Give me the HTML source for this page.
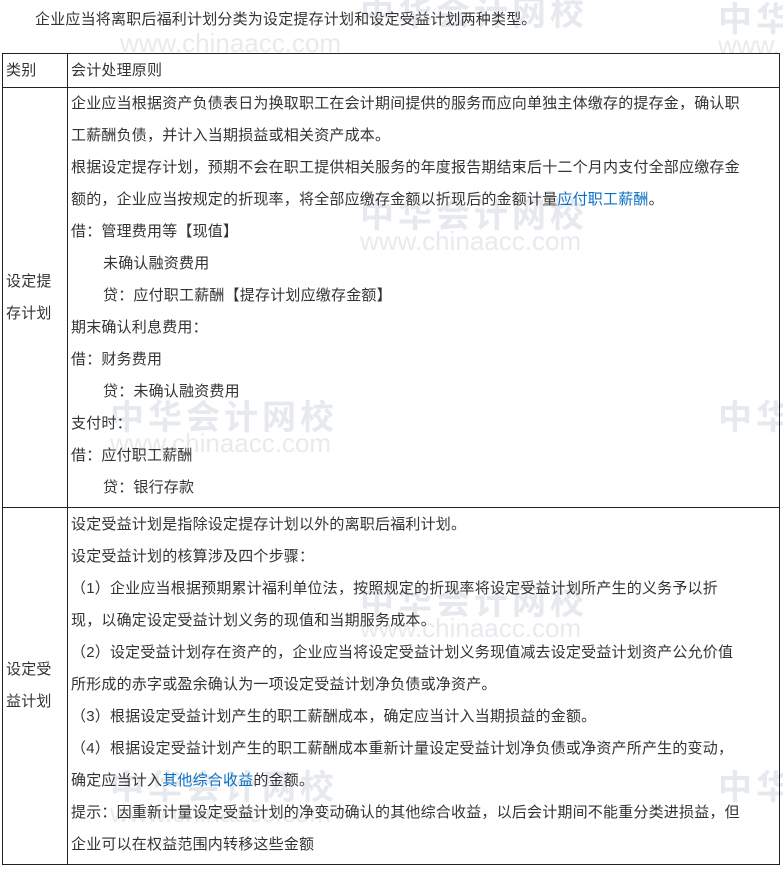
<!DOCTYPE html>
<html><head><meta charset="utf-8"><style>
body{margin:0;background:#fff;width:783px;height:869px;position:relative;overflow:hidden;font-family:"Liberation Sans","Noto Sans CJK SC",sans-serif;font-size:15px;letter-spacing:0.2px;color:#333}
.wm{position:absolute;color:#e6e9ee;font-weight:bold;font-size:34px;letter-spacing:4px;z-index:0;white-space:nowrap}
.wu{position:absolute;color:#e8eaee;font-size:26px;z-index:0;white-space:nowrap;letter-spacing:0}
p.top{position:absolute;left:35px;top:8px;margin:0;line-height:24px;z-index:1;white-space:nowrap}
table{position:absolute;left:2px;top:53px;border-collapse:collapse;z-index:1}
td{border:1px solid #222;padding:0 3px;line-height:32px;vertical-align:middle;white-space:nowrap}
td.c1{width:58px}
td.c2{width:706px;padding:0 2px 3px 3px;overflow:hidden}
a{color:#0b6fc4;text-decoration:none}
.i{padding-left:32px}
</style></head><body>
<div class="wm" style="left:360px;top:-14px">中华会计网校</div><div class="wu" style="left:120px;top:28px">www.chinaacc.com</div>
<div class="wm" style="left:718px;top:-8px">中华</div><div class="wu" style="left:718px;top:30px">www.</div>
<div class="wm" style="left:360px;top:188px">中华会计网校</div><div class="wu" style="left:360px;top:226px">www.chinaacc.com</div>
<div class="wm" style="left:110px;top:390px">中华会计网校</div><div class="wu" style="left:110px;top:428px">www.chinaacc.com</div>
<div class="wm" style="left:718px;top:390px">中华</div>
<div class="wm" style="left:360px;top:575px">中华会计网校</div><div class="wu" style="left:360px;top:613px">www.chinaacc.com</div>
<div class="wm" style="left:110px;top:760px">中华会计网校</div><div class="wu" style="left:110px;top:798px">www.chinaacc.com</div>
<div class="wm" style="left:718px;top:760px">中华</div>
<p class="top">企业应当将离职后福利计划分类为设定提存计划和设定受益计划两种类型。</p>
<table>
<tr style="height:34px"><td class="c1">类别</td><td class="c2" style="padding-bottom:0">会计处理原则</td></tr>
<tr><td class="c1">设定提<br>存计划</td><td class="c2" style="height:415px">
企业应当根据资产负债表日为换取职工在会计期间提供的服务而应向单独主体缴存的提存金，确认职<br>工薪酬负债，并计入当期损益或相关资产成本。<br>
根据设定提存计划，预期不会在职工提供相关服务的年度报告期结束后十二个月内支付全部应缴存金<br>额的，企业应当按规定的折现率，将全部应缴存金额以折现后的金额计量<a>应付职工薪酬</a>。<br>
借：管理费用等【现值】<br>
<span class="i">未确认融资费用</span><br>
<span class="i">贷：应付职工薪酬【提存计划应缴存金额】</span><br>
期末确认利息费用：<br>
借：财务费用<br>
<span class="i">贷：未确认融资费用</span><br>
支付时：<br>
借：应付职工薪酬<br>
<span class="i">贷：银行存款</span></td></tr>
<tr><td class="c1">设定受<br>益计划</td><td class="c2" style="height:353px">
设定受益计划是指除设定提存计划以外的离职后福利计划。<br>
设定受益计划的核算涉及四个步骤：<br>
（1）企业应当根据预期累计福利单位法，按照规定的折现率将设定受益计划所产生的义务予以折<br>现，以确定设定受益计划义务的现值和当期服务成本。<br>
（2）设定受益计划存在资产的，企业应当将设定受益计划义务现值减去设定受益计划资产公允价值<br>所形成的赤字或盈余确认为一项设定受益计划净负债或净资产。<br>
（3）根据设定受益计划产生的职工薪酬成本，确定应当计入当期损益的金额。<br>
（4）根据设定受益计划产生的职工薪酬成本重新计量设定受益计划净负债或净资产所产生的变动，<br>确定应当计入<a>其他综合收益</a>的金额。<br>
提示：因重新计量设定受益计划的净变动确认的其他综合收益，以后会计期间不能重分类进损益，但<br>企业可以在权益范围内转移这些金额</td></tr>
</table>
</body></html>
